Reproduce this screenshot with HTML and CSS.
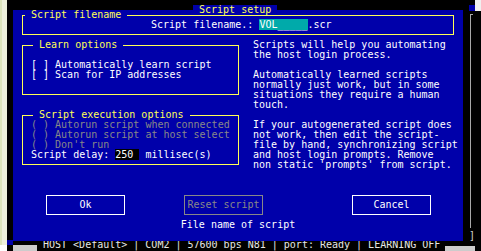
FILE: index.html
```html
<!DOCTYPE html>
<html lang="en">
<head>
  <meta charset="UTF-8" />
  <title>Script setup</title>
  <link rel="stylesheet" href="styles.css">
</head>

<body>
  <div class="screen">

    <!-- restos de la ventana de fondo -->
    <div class="back-frame"></div>
    <div class="back-bracket">]</div>
    <div class="back-block back-top-blue"></div>
    <div class="back-block back-top-light"></div>
    <div class="back-block back-left-blue"></div>
    <div class="back-block back-left-white"></div>
    <div class="back-block back-left-gray"></div>
    <div class="back-block back-right-gray"></div>

    <div class="desk">
      <div class="dialog">
        <div class="title"> Script setup </div>

        <fieldset class="group group-file">
          <legend> Script filename </legend>
          <div class="field">Script filename.: <span class="input">VOL_____</span>.scr</div>
        </fieldset>

        <div class="columns">
          <div class="left">
            <fieldset class="group group-learn">
              <legend> Learn options </legend>
              <div>[ ] Automatically learn script</div>
              <div>[ ] Scan for IP addresses</div>
            </fieldset>

            <fieldset class="group group-exec">
              <legend> Script execution options </legend>
              <div class="off">( ) Autorun script when connected</div>
              <div class="off">( ) Autorun script at host select</div>
              <div class="off">( ) Don't run</div>
              <div>Script delay: <span class="number">250 </span> millisec(s)</div>
            </fieldset>
          </div>

          <div class="help">
            <p>Scripts will help you automating
the host login process.</p>
            <p>Automatically learned scripts
normally just work, but in some
situations they require a human
touch.</p>
            <p>If your autogenerated script does
not work, then edit the script-
file by hand, synchronizing script
and host login prompts. Remove
non static 'prompts' from script.</p>
          </div>
        </div>

        <div class="buttons">
          <button class="btn btn-ok">Ok</button>
          <button class="btn btn-reset" disabled>Reset script</button>
          <button class="btn btn-cancel">Cancel</button>
        </div>

        <div class="hint">File name of script</div>
      </div>
    </div>

    <div class="status">HOST &lt;Default&gt; | COM2 | 57600 bps N81 | port: Ready | LEARNING OFF</div>
  </div>
</body>
</html>
```

FILE: styles.css
```css
* {
  box-sizing: border-box;
}

body {
  margin: 0;
  background-color: #000;
  font-family: "DejaVu Sans Mono", "Liberation Mono", monospace;
  font-size: 10px;
  line-height: 10px;
}

/* el texto de pantalla conserva sus espacios */
.title,
.group legend,
.group div,
.help p,
.hint,
.btn,
.status {
  white-space: pre;
}

.screen {
  position: relative;
  width: 481px;
  height: 251px;
  overflow: hidden;
  background: linear-gradient(to right, #dde4bd 0 2px, #eef0dc 2px 7px, #000 7px);
}

.desk {
  height: 240px;
  padding: 5px 0 0 13px;
}

.dialog {
  position: relative;
  width: 450px;
  height: 231px;
  background-color: #0000aa;
  color: #fff;
}

.title {
  position: absolute;
  top: -5px;
  left: 180px;
  background-color: #0000aa;
  color: #ffff55;
}

/* grupos con marco amarillo */
.group {
  margin: 0;
  padding: 0;
  min-width: 0;
  border: 1px solid #ffff55;
}

.group legend {
  margin-left: 2px;
  padding: 0;
  color: #ffff55;
}

.group-file {
  width: 432px;
  margin: 5px 0 0 9px;
  padding-bottom: 4px;
}

.field {
  padding-left: 128px;
}

.input {
  background-color: #00aaaa;
}

.columns {
  display: flex;
  align-items: flex-start;
  margin-top: 5px;
}

.left {
  width: 217px;
  margin-left: 9px;
}

.group-learn {
  padding: 10px 0 14px 8px;
}

.group-exec {
  margin-top: 15px;
  padding: 0 0 4px 8px;
}

.off {
  color: #888;
}

.number {
  background-color: #000;
}

.help {
  margin-left: 14px;
}

.help p {
  margin: 0 0 10px;
}

.buttons {
  display: flex;
  margin-top: 15px;
  padding-left: 33px;
}

.btn {
  width: 79px;
  height: 20px;
  padding: 0;
  border: 1px solid #fff;
  background: none;
  color: #fff;
  font: inherit;
  line-height: 10px;
}

.btn-reset {
  margin-left: 59px;
  border-color: #888;
  color: #888;
}

.btn-cancel {
  margin-left: 89px;
}

.hint {
  margin-top: 5px;
  text-align: center;
}

.status {
  height: 11px;
  padding-left: 43px;
  color: #e6e6e6;
}

/* fondo */
.back-frame {
  position: absolute;
  left: 470px;
  top: 14px;
  width: 3px;
  height: 214px;
  border-top: 1px solid #a8a8a8;
  border-left: 1px solid #a8a8a8;
}

.back-bracket {
  position: absolute;
  left: 469px;
  top: 231px;
  color: #d0d0d0;
}

.back-block {
  position: absolute;
}

.back-top-blue {
  left: 469px;
  top: 5px;
  width: 6px;
  height: 6px;
  background-color: #0000aa;
}

.back-top-light {
  left: 475px;
  top: 0;
  width: 6px;
  height: 11px;
  background-color: #f0f0f0;
}

.back-left-blue {
  left: 7px;
  top: 240px;
  width: 6px;
  height: 5px;
  background-color: #0000aa;
}

.back-left-white {
  left: 0;
  top: 245px;
  width: 7px;
  height: 6px;
  background-color: #fff;
}

.back-left-gray {
  left: 13px;
  top: 245px;
  width: 24px;
  height: 6px;
  background-color: #cccccc;
}

.back-right-gray {
  left: 445px;
  top: 246px;
  width: 30px;
  height: 5px;
  background-color: #cccccc;
}
```
